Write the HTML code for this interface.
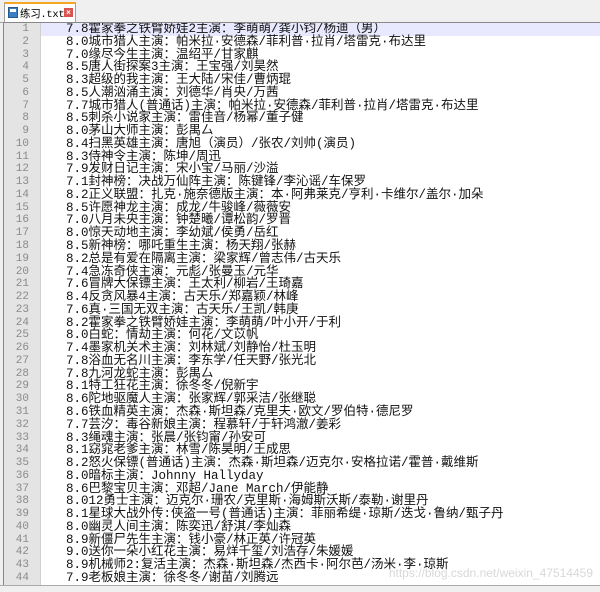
<!DOCTYPE html>
<html><head><meta charset="utf-8"><style>
html,body{margin:0;padding:0;width:600px;height:591px;overflow:hidden;background:#f0f0f0;}
.tabbar{position:absolute;left:0;top:0;width:600px;height:22px;background:#f0f0f0;border-bottom:1px solid #a0a0a0;}
.tab{position:absolute;left:4px;top:2px;width:72px;height:20px;background:#fff;border:1px solid #a0a0a0;border-bottom:none;border-top:2px solid #f5a623;box-sizing:border-box;font:12px "Liberation Mono","Noto Sans CJK SC",monospace;}
.tab .ic{position:absolute;left:3px;top:3px;width:10px;height:11px;background:#3a7fc2;border:1px solid #225a90;box-sizing:border-box;}
.tab .ic:after{content:"";position:absolute;left:1px;top:1px;width:6px;height:3px;background:#fff;}
.tab .t{position:absolute;left:15px;top:2px;font-size:10.5px;white-space:nowrap;letter-spacing:-0.3px;}
.tab .x{position:absolute;right:2px;top:4px;width:9px;height:9px;background:#d9534f;color:#fff;font:bold 8px/9px "Liberation Sans",sans-serif;text-align:center;}
.ed{position:absolute;left:3px;top:22px;width:597px;height:563px;background:#fff;border-left:1px solid #888;border-top:1px solid #888;overflow:hidden;}
.gut{position:absolute;left:0;top:0;width:36px;height:100%;background:#e4e4e4;border-right:1px solid #d0d0d0;}
.hl{position:absolute;left:37px;top:0;width:560px;height:13px;background:#e8e8ff;}
.nums{position:absolute;left:0;top:0;width:25px;text-align:right;font:11px/12.77px "Liberation Mono",monospace;color:#8a8a8a;}
.txt{position:absolute;left:62px;top:0;font:12.5px/12.77px "Liberation Mono","Noto Sans CJK SC",monospace;color:#111;white-space:pre;}
.wm{position:absolute;right:8px;bottom:6px;font:12px "Liberation Sans",sans-serif;color:#d8d8d8;}
.bot{position:absolute;left:0;top:585px;width:600px;height:6px;background:#f0f0f0;border-top:1px solid #aaa;}
</style></head><body>
<div class="tabbar"><div class="tab"><div class="ic"></div><span class="t">练习.txt</span><span class="x">×</span></div></div>
<div class="ed">
<div class="gut"></div><div class="hl"></div>
<div class="nums">1<br>2<br>3<br>4<br>5<br>6<br>7<br>8<br>9<br>10<br>11<br>12<br>13<br>14<br>15<br>16<br>17<br>18<br>19<br>20<br>21<br>22<br>23<br>24<br>25<br>26<br>27<br>28<br>29<br>30<br>31<br>32<br>33<br>34<br>35<br>36<br>37<br>38<br>39<br>40<br>41<br>42<br>43<br>44</div>
<div class="txt">7.8霍家拳之铁臂娇娃2主演：李萌萌/龚小钧/杨迪（男）
8.0城市猎人主演：帕米拉·安德森/菲利普·拉肖/塔雷克·布达里
7.0缘尽今生主演：温绍平/甘家麒
8.5唐人街探案3主演：王宝强/刘昊然
8.3超级的我主演：王大陆/宋佳/曹炳琨
8.5人潮汹涌主演：刘德华/肖央/万茜
7.7城市猎人(普通话)主演：帕米拉·安德森/菲利普·拉肖/塔雷克·布达里
8.5刺杀小说家主演：雷佳音/杨幂/董子健
8.0茅山大师主演：彭禺厶
8.4扫黑英雄主演：唐旭（演员）/张农/刘帅(演员)
8.3侍神令主演：陈坤/周迅
7.9发财日记主演：宋小宝/马丽/沙溢
7.1封神榜：决战万仙阵主演：陈键锋/李沁谣/车保罗
8.2正义联盟：扎克·施奈德版主演：本·阿弗莱克/亨利·卡维尔/盖尔·加朵
8.5许愿神龙主演：成龙/牛骏峰/薇薇安
7.0八月未央主演：钟楚曦/谭松韵/罗晋
8.0惊天动地主演：李幼斌/侯勇/岳红
8.5新神榜：哪吒重生主演：杨天翔/张赫
8.2总是有爱在隔离主演：梁家辉/曾志伟/古天乐
7.4急冻奇侠主演：元彪/张曼玉/元华
7.6冒牌大保镖主演：王太利/柳岩/王琦嘉
8.4反贪风暴4主演：古天乐/郑嘉颖/林峰
7.6真·三国无双主演：古天乐/王凯/韩庚
8.2霍家拳之铁臂娇娃主演：李萌萌/叶小开/于利
8.0白蛇：情劫主演：何花/文苡帆
7.4墨家机关术主演：刘林斌/刘静怡/杜玉明
7.8浴血无名川主演：李东学/任天野/张光北
7.8九河龙蛇主演：彭禺厶
8.1特工狂花主演：徐冬冬/倪新宇
8.6陀地驱魔人主演：张家辉/郭采洁/张继聪
8.6铁血精英主演：杰森·斯坦森/克里夫·欧文/罗伯特·德尼罗
7.7芸汐：毒谷新娘主演：程慕轩/于轩鸿澈/姜彩
8.3绳魂主演：张晨/张钧甯/孙安可
8.1窈窕老爹主演：林雪/陈昊明/王成思
8.2怒火保镖(普通话)主演：杰森·斯坦森/迈克尔·安格拉诺/霍普·戴维斯
8.0暗标主演：Johnny Hallyday
8.6巴黎宝贝主演：邓超/Jane March/伊能静
8.012勇士主演：迈克尔·珊农/克里斯·海姆斯沃斯/泰勒·谢里丹
8.1星球大战外传:侠盗一号(普通话)主演：菲丽希缇·琼斯/迭戈·鲁纳/甄子丹
8.0幽灵人间主演：陈奕迅/舒淇/李灿森
8.9新僵尸先生主演：钱小豪/林正英/许冠英
9.0送你一朵小红花主演：易烊千玺/刘浩存/朱媛媛
8.9机械师2:复活主演：杰森·斯坦森/杰西卡·阿尔芭/汤米·李·琼斯
7.9老板娘主演：徐冬冬/谢苗/刘腾远</div>
<div class="wm">https://blog.csdn.net/weixin_47514459</div>
</div>
<div class="bot"></div>
</body></html>
